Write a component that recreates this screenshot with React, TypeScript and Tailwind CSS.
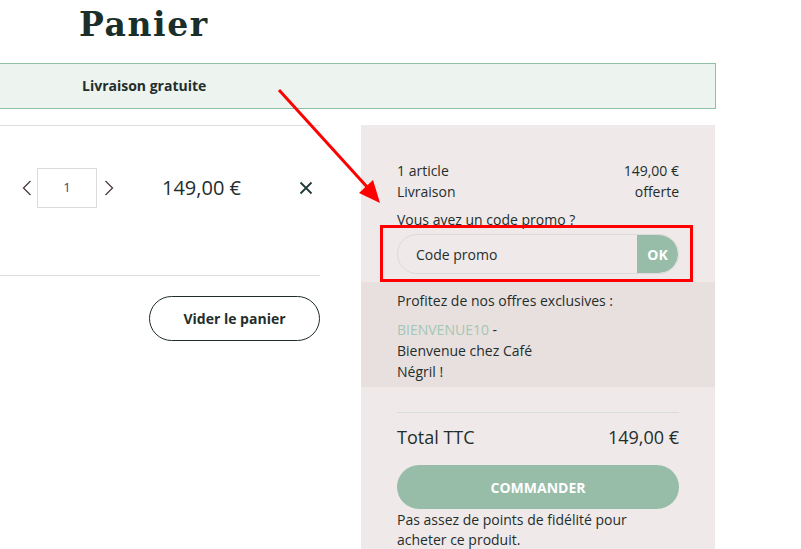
import React from "react";

export default function App() {
  const body = { fontFamily: '"Open Sans", "Liberation Sans", sans-serif' };
  return (
    <div className="relative w-[801px] h-[549px] overflow-hidden bg-white text-[#1f2e2c]" style={body}>
      <div className="h-[63px] pl-[79px] pt-[4px]">
        <h1
          className="text-[33px] leading-[42px] font-bold tracking-[1.6px] text-[#1b2f2a]"
          style={{ fontFamily: '"DejaVu Serif", "Liberation Serif", serif' }}
        >
          Panier
        </h1>
      </div>
      <div className="w-[716px] h-[46px] flex items-center pl-[82px] bg-[#edf3ee] border-y border-r border-[#8fbfa5]">
        <span className="text-[14px] font-bold text-[#1f2e2c] mt-[-1px]">Livraison gratuite</span>
      </div>
      <div className="flex mt-[16px] gap-[41px]">
        <div className="w-[320px] flex flex-col">
          <div className="h-[151px] border-y border-[#dedede] pt-[42px]">
            <div className="flex items-center ml-[22px] h-[40px]">
              <svg width="10" height="16" viewBox="0 0 10 16" className="mr-[5px]">
                <path d="M8.5 1 L1.5 8 L8.5 15" fill="none" stroke="#4a3a44" strokeWidth="1.3" />
              </svg>
              <div className="w-[60px] h-[40px] border border-[#dcdcdc] flex items-center justify-center text-[13px] text-[#2b4a6a]">
                1
              </div>
              <svg width="10" height="16" viewBox="0 0 10 16" className="ml-[7px]">
                <path d="M1.5 1 L8.5 8 L1.5 15" fill="none" stroke="#4a3a44" strokeWidth="1.3" />
              </svg>
              <span className="ml-[48px] text-[20px] text-[#1f2e2c]">149,00 €</span>
              <svg width="14" height="14" viewBox="0 0 14 14" className="ml-[58px]">
                <path d="M1.5 1.5 L12.5 12.5 M12.5 1.5 L1.5 12.5" stroke="#1f3a35" strokeWidth="1.8" />
              </svg>
            </div>
          </div>
          <div className="flex justify-end mt-[20px]">
            <button className="w-[171px] h-[45px] rounded-full border border-[#1f2e2c] text-[14px] font-bold text-[#1f2e2c]">
              Vider le panier
            </button>
          </div>
        </div>
        <div className="w-[354px] h-[430px] bg-[#efe9e9] flex flex-col text-[14px] leading-[21px]">
          <div className="px-[36px] pt-[35px]">
            <div className="flex justify-between">
              <span>1 article</span>
              <span>149,00 €</span>
            </div>
            <div className="flex justify-between">
              <span>Livraison</span>
              <span>offerte</span>
            </div>
            <div className="mt-[7px]">Vous avez un code promo ?</div>
            <div className="mt-[4px] h-[40px] flex rounded-full border border-[#dcdada] overflow-hidden">
              <div className="flex-1 flex items-center pl-[18px] text-[14px]">Code promo</div>
              <div className="w-[41px] bg-[#97bda9] text-white font-bold flex items-center justify-center rounded-r-full">
                OK
              </div>
            </div>
          </div>
          <div className="mt-[8px] h-[105px] bg-[#e8e0df] px-[36px] pt-[8px]">
            <div>Profitez de nos offres exclusives :</div>
            <div className="mt-[8px]">
              <span className="text-[#a3c7b5]">BIENVENUE10</span> -
              <br />
              Bienvenue chez Café
              <br />
              Négril !
            </div>
          </div>
          <div className="px-[36px]">
            <div className="mt-[25px] border-t border-[#d9dcdc] pt-[11px] flex justify-between text-[18px] leading-[26px]">
              <span>Total TTC</span>
              <span>149,00 €</span>
            </div>
            <div className="mt-[15px] h-[44px] rounded-full bg-[#97bda9] text-white font-bold flex items-center justify-center text-[14px]">
              COMMANDER
            </div>
            <div className="mt-[1px] leading-[20px]">
              Pas assez de points de fidélité pour
              <br />
              acheter ce produit.
            </div>
          </div>
        </div>
      </div>
      <div className="absolute left-[380px] top-[225px] w-[313px] h-[57px] border-[3px] border-[#ff0000]" />
      <svg className="absolute left-0 top-0 pointer-events-none" width="801" height="549">
        <line x1="279" y1="90" x2="368" y2="188" stroke="#ff0000" strokeWidth="3" />
        <polygon points="380,203 359,193 373,180" fill="#ff0000" />
      </svg>
    </div>
  );
}
